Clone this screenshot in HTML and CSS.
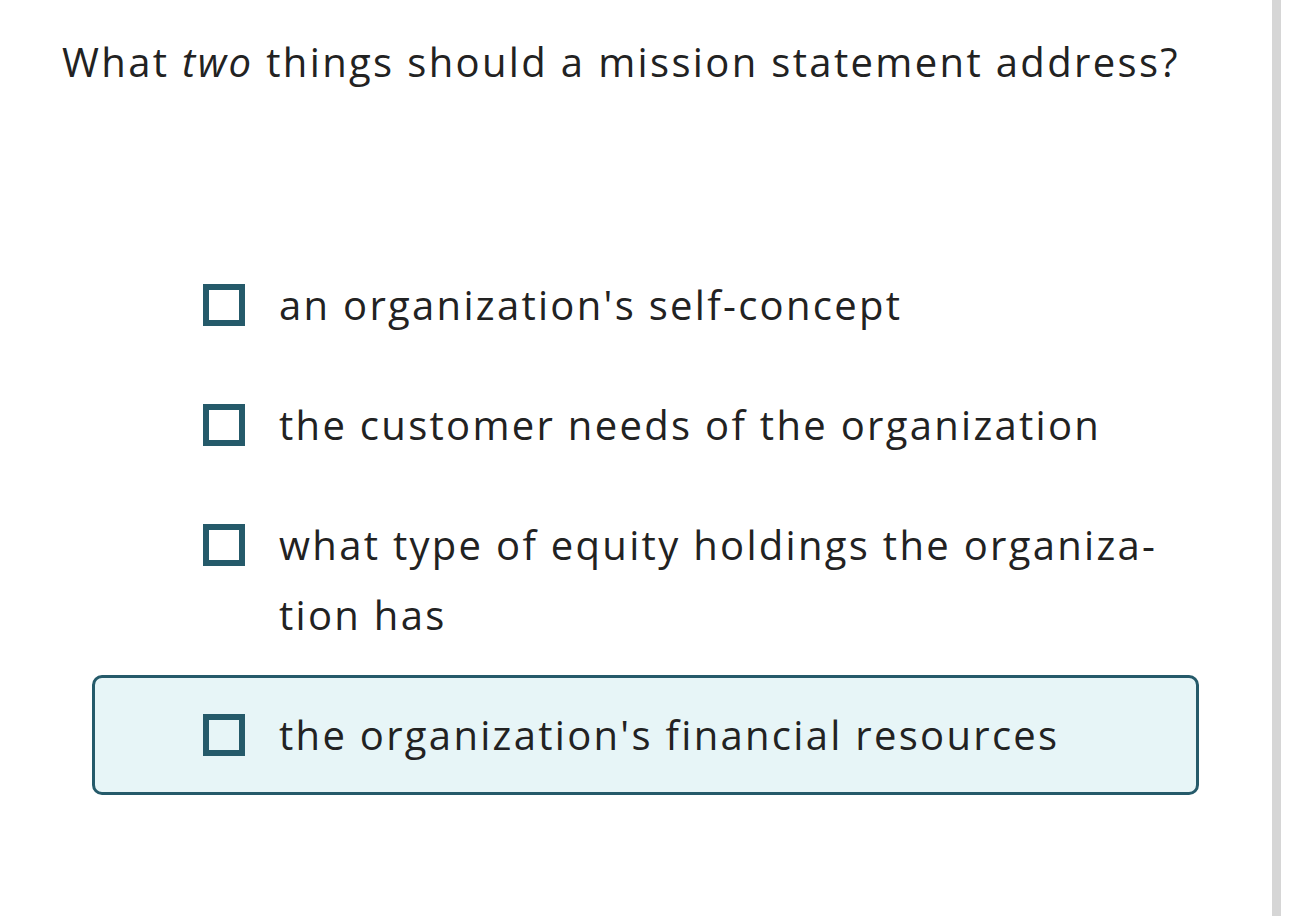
FILE: index.html
```html
<!DOCTYPE html>
<html lang="en">
<head>
<meta charset="utf-8">
<title>Question</title>
<link rel="stylesheet" href="styles.css">
</head>
<body>
<div class="page">
  <main class="main">
    <h1 class="question">What <em>two</em> things should a mission statement address?</h1>
    <ul class="options">
      <li class="option"><span class="box"></span><span class="label">an organization's self-concept</span></li>
      <li class="option"><span class="box"></span><span class="label">the customer needs of the organization</span></li>
      <li class="option"><span class="box"></span><span class="label">what type of equity holdings the organiza-<br>tion has</span></li>
      <li class="option focused"><span class="box"></span><span class="label">the organization's financial resources</span></li>
    </ul>
  </main>
  <div class="track"></div>
  <div class="edge"></div>
</div>
</body>
</html>
```

FILE: styles.css
```css
html, body {
  margin: 0;
  padding: 0;
  background: #ffffff;
}
body {
  font-family: "Open Sans", "Lato", sans-serif;
  color: #222222;
}
.page {
  display: flex;
  height: 916px;
  overflow: hidden;
}
.main {
  flex: 1;
}
.track {
  width: 9px;
  background: #d6d6d6;
}
.edge {
  width: 9px;
}
.question {
  margin: 0;
  padding: 27px 0 0 62px;
  font-size: 40px;
  line-height: 70px;
  font-weight: 400;
  letter-spacing: 2.35px;
  white-space: nowrap;
}
.question em {
  font-style: italic;
}
.options {
  list-style: none;
  margin: 148px 0 0 92px;
  padding: 0;
  width: 1107px;
}
.option {
  display: flex;
  align-items: flex-start;
  box-sizing: border-box;
  padding: 22px 20px 22px 108px;
  border: 3px solid transparent;
  border-radius: 10px;
  font-size: 40px;
  line-height: 70px;
  letter-spacing: 2.3px;
  white-space: nowrap;
}
.option.focused {
  border-color: #255a6a;
  background: #e7f5f7;
}
.box {
  flex: none;
  width: 42px;
  height: 42px;
  box-sizing: border-box;
  border: 6px solid #255a6a;
  margin-top: 14px;
  margin-right: 34px;
}
.label {
  display: block;
}
```
